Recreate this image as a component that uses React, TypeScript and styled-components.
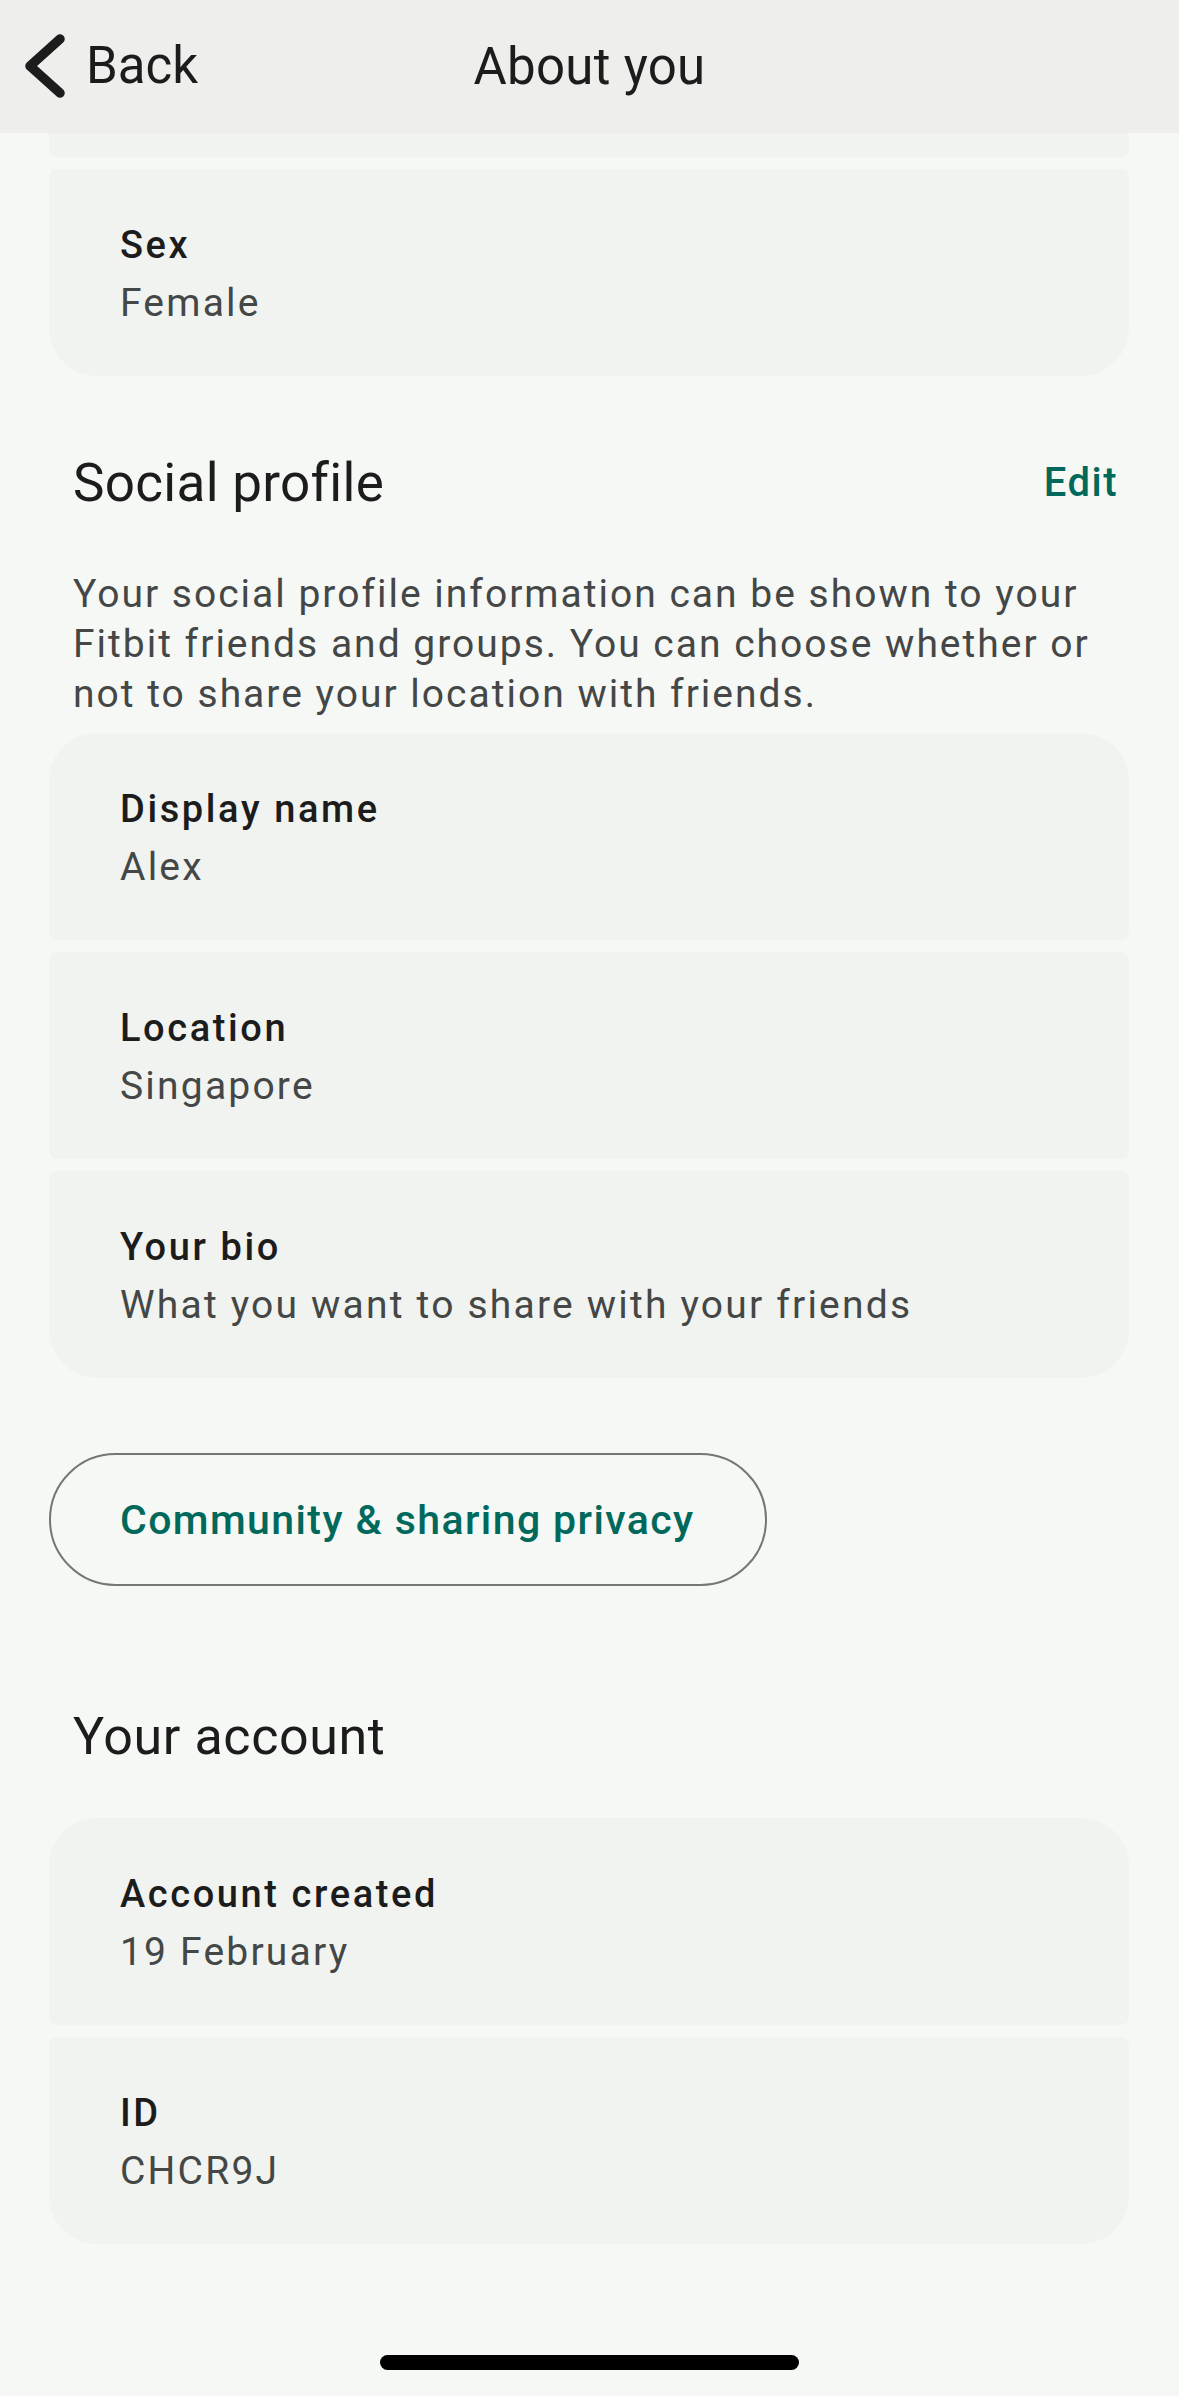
import React from 'react';
import styled, { createGlobalStyle } from 'styled-components';

const GlobalStyle = createGlobalStyle`
  html, body {
    margin: 0;
    padding: 0;
    background-color: #f6f8f5;
  }

  body {
    font-family: Roboto, "Noto Sans", "Liberation Sans", sans-serif;
    -webkit-font-smoothing: antialiased;
  }
`;

type Item = { label: string; value: string };

const socialItems: Item[] = [
  { label: 'Display name', value: 'Alex' },
  { label: 'Location', value: 'Singapore' },
  { label: 'Your bio', value: 'What you want to share with your friends' },
];

const accountItems: Item[] = [
  { label: 'Account created', value: '19 February' },
  { label: 'ID', value: 'CHCR9J' },
];

const ChevronLeft = () => (
  <svg width="42" height="66" viewBox="0 0 42 66" fill="none">
    <path
      d="M36 6 L6 33 L36 60"
      stroke="#1b1c1b"
      strokeWidth="9.5"
      strokeLinecap="round"
      strokeLinejoin="round"
    />
  </svg>
);

const InfoGroup: React.FC<{ items: Item[]; openTop?: boolean }> = ({ items, openTop }) => (
  <Group>
    {items.map((item, i) => (
      <Card
        key={item.label}
        first={i === 0 && !openTop}
        last={i === items.length - 1}
      >
        <Label>{item.label}</Label>
        <Value>{item.value}</Value>
      </Card>
    ))}
  </Group>
);

const App: React.FC = () => {
  return (
    <>
      <GlobalStyle />
      <Screen>
        <Header>
          <BackButton>
            <ChevronLeft />
            <BackText>Back</BackText>
          </BackButton>
          <Title>About you</Title>
        </Header>

        <Content>
          <Group>
            <CardStub />
            <InfoGroup items={[{ label: 'Sex', value: 'Female' }]} openTop />
          </Group>

          <SectionHeader>
            <SectionTitle>Social profile</SectionTitle>
            <EditLink>Edit</EditLink>
          </SectionHeader>
          <Description>
            Your social profile information can be shown to your Fitbit friends and groups. You
            can choose whether or not to share your location with friends.
          </Description>
          <InfoGroup items={socialItems} />

          <OutlineButton>Community &amp; sharing privacy</OutlineButton>

          <AccountTitle>Your account</AccountTitle>
          <InfoGroup items={accountItems} />
        </Content>

        <HomeIndicator />
      </Screen>
    </>
  );
};

const Screen = styled.div`
  width: 1179px;
  min-height: 2396px;
  background-color: #f6f8f5;
  display: flex;
  flex-direction: column;
`;

const Header = styled.header`
  position: relative;
  height: 133px;
  background-color: #eeefed;
  display: flex;
  align-items: center;
  padding: 0 24px;
  box-sizing: border-box;
`;

const BackButton = styled.div`
  display: flex;
  align-items: center;
  gap: 20px;
  margin-top: -2px;
`;

const BackText = styled.span`
  font-size: 51px;
  color: #1b1c1b;
  line-height: 64px;
`;

const Title = styled.h1`
  position: absolute;
  left: 0;
  right: 0;
  margin: 0;
  text-align: center;
  font-size: 51px;
  font-weight: 400;
  color: #1b1c1b;
  line-height: 64px;
  letter-spacing: 0.3px;
  pointer-events: none;
`;

const Content = styled.main`
  display: flex;
  flex-direction: column;
  padding: 0 50px 0 49px;
`;

const Group = styled.div`
  display: flex;
  flex-direction: column;
  gap: 12px;
`;

const CardStub = styled.div`
  height: 24px;
  background-color: #f1f3f0;
  border-radius: 0 0 8px 8px;
`;

const Card = styled.div<{ first: boolean; last: boolean }>`
  height: 207px;
  box-sizing: border-box;
  padding: 48px 71px 0;
  background-color: #f1f3f0;
  border-radius: ${({ first }) => (first ? '48px 48px' : '8px 8px')}
    ${({ last }) => (last ? '48px 48px' : '8px 8px')};
  display: flex;
  flex-direction: column;
`;

const Label = styled.div`
  font-size: 38px;
  font-weight: 500;
  line-height: 56px;
  letter-spacing: 2.6px;
  color: #1b1c1b;
`;

const Value = styled.div`
  font-size: 39px;
  line-height: 60px;
  letter-spacing: 2.2px;
  color: #444746;
`;

const SectionHeader = styled.div`
  display: flex;
  align-items: center;
  justify-content: space-between;
  margin-top: 75px;
  padding: 0 11px 0 24px;
`;

const SectionTitle = styled.h2`
  margin: 0;
  font-size: 53px;
  font-weight: 400;
  line-height: 64px;
  letter-spacing: 0.3px;
  color: #1b1c1b;
`;

const EditLink = styled.span`
  font-size: 40px;
  font-weight: 500;
  line-height: 64px;
  letter-spacing: 1.5px;
  color: #00695c;
`;

const Description = styled.p`
  margin: 54px 0 14px;
  padding: 0 24px;
  font-size: 39px;
  line-height: 50px;
  letter-spacing: 2px;
  color: #444746;
`;

const OutlineButton = styled.button`
  align-self: flex-start;
  margin-top: 75px;
  width: 718px;
  height: 133px;
  box-sizing: border-box;
  padding: 0 0 0 69px;
  border: 2.5px solid #757775;
  border-radius: 67px;
  background: transparent;
  font-family: inherit;
  font-size: 41px;
  font-weight: 500;
  letter-spacing: 1.4px;
  color: #00695c;
  text-align: left;
`;

const AccountTitle = styled.h2`
  margin: 119px 0 49px;
  padding: 0 24px;
  font-size: 52px;
  font-weight: 400;
  line-height: 64px;
  letter-spacing: 0.6px;
  color: #1b1c1b;
`;

const HomeIndicator = styled.div`
  align-self: center;
  width: 419px;
  height: 15px;
  margin-top: 111px;
  border-radius: 8px;
  background-color: #000;
`;

export default App;
